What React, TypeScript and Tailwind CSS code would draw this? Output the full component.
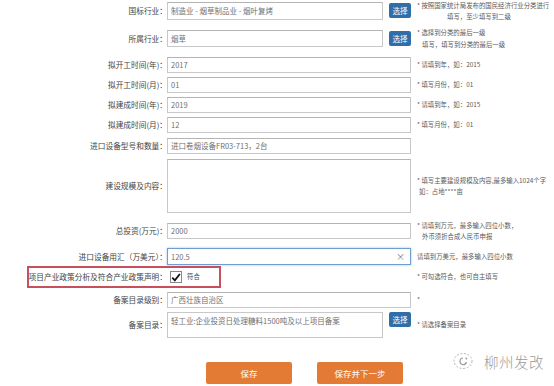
import React from "react";

const font = "font-['Noto_Sans_CJK_SC','Noto_Sans',sans-serif]";

function Label({ children }: { children: React.ReactNode }) {
  return (
    <div className="w-[167px] shrink-0 whitespace-nowrap text-right text-[7.7px] leading-none text-[#444]">
      {children}
    </div>
  );
}

function Note({ lines }: { lines: { text: string; pad?: string }[] }) {
  return (
    <div className="ml-[6px] whitespace-nowrap text-[6.4px] leading-[11.5px] text-[#5a5a5a]">
      {lines.map((l, i) => (
        <div key={i} className={l.pad ?? ""}>
          {l.text}
        </div>
      ))}
    </div>
  );
}

function PickButton() {
  return (
    <div className="flex h-[15px] w-[22px] items-center justify-center rounded-[2px] bg-[#2f6ea6] text-[7.5px] text-white">
      选择
    </div>
  );
}

function Box({ value, cls }: { value?: string; cls: string }) {
  return (
    <div
      className={`${cls} flex items-center border border-[#c8c8c8] border-t-[#b4b4b4] bg-white px-[3px] text-[7.5px] text-[#707070] whitespace-nowrap overflow-hidden`}
    >
      {value}
    </div>
  );
}

export default function App() {
  return (
    <div className={`relative h-[386px] w-[554px] overflow-hidden bg-white ${font}`}>
      {/* 国标行业 */}
      <div className="mt-[2px] flex h-[18px] items-center">
        <Label>国标行业：</Label>
        <div className="flex w-[244px] shrink-0 items-start justify-between">
          <Box cls="h-[18px] w-[216px]" value="制造业 - 烟草制品业 - 烟叶复烤" />
          <div className="mt-[1px]">
            <PickButton />
          </div>
        </div>
        <Note
          lines={[
            { text: "* 按照国家统计局发布的国民经济行业分类进行" },
            { text: "填写，至少填写到二级", pad: "pl-[30px]" },
          ]}
        />
      </div>

      {/* 所属行业 */}
      <div className="mt-[10px] flex h-[17px] items-center">
        <Label>所属行业：</Label>
        <div className="flex w-[244px] shrink-0 items-start justify-between">
          <Box cls="h-[17px] w-[216px]" value="烟草" />
          <div className="mt-[1px]">
            <PickButton />
          </div>
        </div>
        <Note
          lines={[
            { text: "* 选择到分类的最后一级" },
            { text: "填写，填写到分类的最后一级", pad: "pl-[5px]" },
          ]}
        />
      </div>

      <div className="mt-[10px] flex h-[16px] items-center">
        <Label>拟开工时间(年)：</Label>
        <Box cls="h-[16px] w-[244px] shrink-0" value="2017" />
        <Note lines={[{ text: "* 请填到年，如：2015" }]} />
      </div>

      <div className="mt-[4px] flex h-[16px] items-center">
        <Label>拟开工时间(月)：</Label>
        <Box cls="h-[16px] w-[244px] shrink-0" value="01" />
        <Note lines={[{ text: "* 填写月份，如：01" }]} />
      </div>

      <div className="mt-[4px] flex h-[16px] items-center">
        <Label>拟建成时间(年)：</Label>
        <Box cls="h-[16px] w-[244px] shrink-0" value="2019" />
        <Note lines={[{ text: "* 请填到年，如：2015" }]} />
      </div>

      <div className="mt-[4px] flex h-[16px] items-center">
        <Label>拟建成时间(月)：</Label>
        <Box cls="h-[16px] w-[244px] shrink-0" value="12" />
        <Note lines={[{ text: "* 填写月份，如：01" }]} />
      </div>

      <div className="mt-[5px] flex h-[16px] items-center">
        <Label>进口设备型号和数量：</Label>
        <Box cls="h-[16px] w-[244px] shrink-0" value="进口卷烟设备FR03-713，2台" />
      </div>

      <div className="mt-[5px] flex h-[54px] items-center">
        <Label>建设规模及内容：</Label>
        <Box cls="h-[54px] w-[244px] shrink-0" />
        <Note
          lines={[
            { text: "* 填写主要建设规模及内容,最多输入1024个字" },
            { text: "如：占地****亩", pad: "pl-[2px]" },
          ]}
        />
      </div>

      <div className="mt-[10px] flex h-[16px] items-center">
        <Label>总投资(万元)：</Label>
        <Box cls="h-[16px] w-[244px] shrink-0" value="2000" />
        <Note
          lines={[
            { text: "* 请填到万元，最多输入四位小数，" },
            { text: "外币须折合成人民币申报", pad: "pl-[5px]" },
          ]}
        />
      </div>

      <div className="mt-[9px] flex h-[17px] items-center">
        <Label>进口设备用汇（万美元）：</Label>
        <div className="flex h-[17px] w-[244px] shrink-0 items-center justify-between border border-[#6f9fd0] bg-white px-[3px] text-[7.5px] text-[#707070] shadow-[0_0_2px_rgba(80,140,210,0.6)]">
          <span>120.5</span>
          <span className="pr-[2px] text-[9px] text-[#777]">×</span>
        </div>
        <Note lines={[{ text: "请填到万美元，最多输入四位小数" }]} />
      </div>

      {/* 产业政策声明 */}
      <div className="relative mt-[1px] flex h-[22px] items-center">
        <Label>项目产业政策分析及符合产业政策声明：</Label>
        <div className="flex w-[244px] shrink-0 items-center">
          <div className="ml-[3px] flex h-[12px] w-[12px] items-center justify-center border border-[#888] bg-white">
            <svg width="11" height="11" viewBox="0 0 12 12">
              <path d="M1.5 6.2 L4.6 9.4 L10.6 1.8" fill="none" stroke="#111" strokeWidth="2.2" />
            </svg>
          </div>
          <span className="ml-[5px] text-[6.4px] text-[#444]">符合</span>
        </div>
        <Note lines={[{ text: "* 可勾选符合，也可自主填写" }]} />
        <div className="absolute inset-y-0 left-[27px] w-[194px] border-2 border-[#c8505c]" />
      </div>

      <div className="mt-[4px] flex h-[16px] items-center">
        <Label>备案目录级别：</Label>
        <Box cls="h-[16px] w-[244px] shrink-0" value="广西壮族自治区" />
        <Note lines={[{ text: "*" }]} />
      </div>

      <div className="mt-[4px] flex h-[26px] items-center">
        <Label>备案目录：</Label>
        <div className="flex w-[244px] shrink-0 items-start justify-between">
          <div className="h-[26px] w-[216px] border border-[#c8c8c8] bg-white px-[3px] pt-[2px] text-[7.5px] text-[#707070] whitespace-nowrap">
            轻工业:企业投资日处理糖料1500吨及以上项目备案
          </div>
          <PickButton />
        </div>
        <Note lines={[{ text: "* 请选择备案目录" }]} />
      </div>

      <div className="mt-[24px] flex gap-[25px] pl-[206px]">
        <div className="flex h-[22px] w-[86px] items-center justify-center rounded-[2px] bg-[#e37b35] text-[8.5px] text-white">
          保存
        </div>
        <div className="flex h-[22px] w-[86px] items-center justify-center rounded-[2px] bg-[#e37b35] text-[8.5px] text-white">
          保存并下一步
        </div>
      </div>

      {/* watermark */}
      <div className="absolute left-[452px] top-[352px] flex items-center gap-[6px] text-[#9a9a9a]">
        <svg width="26" height="20" viewBox="0 0 26 20">
          <ellipse cx="11" cy="9" rx="9" ry="7.5" fill="none" stroke="#b5b5b5" strokeWidth="1" strokeDasharray="2 1.6" />
          <path d="M11 6 A3.3 3.3 0 1 0 14.5 10" fill="none" stroke="#a0a0a0" strokeWidth="1.2" />
          <circle cx="14.3" cy="6.6" r="1" fill="#a0a0a0" />
        </svg>
        <span className="text-[14.5px] font-light leading-none tracking-[0.5px]">柳州发改</span>
      </div>
    </div>
  );
}
